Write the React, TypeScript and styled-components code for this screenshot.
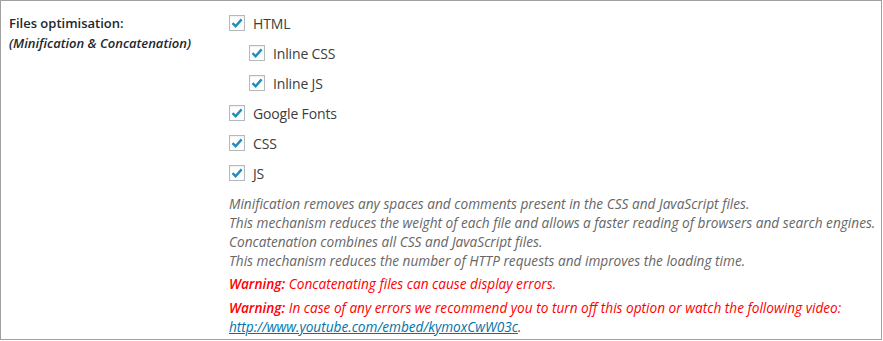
import React from "react";
import styled, { createGlobalStyle } from "styled-components";

const Global = createGlobalStyle`
  html, body { margin: 0; padding: 0; background: #fff; }
  body { font-family: "Open Sans", sans-serif; }
`;

const Panel = styled.div`
  box-sizing: border-box;
  width: 882px;
  height: 340px;
  border: 1px solid #a0a0a0;
  background: #fff;
  display: grid;
  grid-template-columns: 220px 1fr;
  padding: 7px 0 0 8px;
  overflow: hidden;
`;

const Th = styled.div`
  color: #23282d;
  font-size: 13px;
  font-weight: 600;
  line-height: 20px;
  padding-top: 5px;
`;

const Sub = styled.em`
  display: block;
  font-size: 13px;
  font-weight: 600;
`;

const Td = styled.div`
  display: flex;
  flex-direction: column;
`;

const Row = styled.label<{ $indent?: boolean }>`
  display: flex;
  align-items: center;
  gap: 8px;
  height: 30px;
  margin-left: ${(p) => (p.$indent ? "20px" : "0")};
  color: #3c3c3c;
  font-size: 14px;
  letter-spacing: -0.15px;
`;

const Box = styled.span`
  box-sizing: border-box;
  width: 16px;
  height: 16px;
  border: 1px solid #b4b9be;
  box-shadow: inset 0 1px 2px rgba(0, 0, 0, 0.07);
  display: flex;
  align-items: center;
  justify-content: center;
`;

const Desc = styled.p`
  margin: 6px 0 0;
  font-size: 13.65px;
  font-style: italic;
  color: #666;
  line-height: 19px;
`;

const Warn = styled.p`
  margin: 5px 0 0;
  font-size: 13.65px;
  font-style: italic;
  color: #f00;
  line-height: 18.5px;
  &:last-child {
    margin-top: 5.5px;
  }
`;

const Strong = styled.b`
  font-weight: 600;
`;

const Link = styled.a`
  color: #0073aa;
  text-decoration: underline;
`;

const Check = () => (
  <Box>
    <svg width="14" height="14" viewBox="0 0 14 14">
      <path d="M2.5 7.2 L5.6 10.2 L11.6 3.4" fill="none" stroke="#1e8cbe" strokeWidth="2.4" />
    </svg>
  </Box>
);

const items: { label: string; indent?: boolean }[] = [
  { label: "HTML" },
  { label: "Inline CSS", indent: true },
  { label: "Inline JS", indent: true },
  { label: "Google Fonts" },
  { label: "CSS" },
  { label: "JS" },
];

export default function App() {
  return (
    <>
      <Global />
      <Panel>
        <Th>
          Files optimisation:
          <Sub>(Minification &amp; Concatenation)</Sub>
        </Th>
        <Td>
          {items.map((it) => (
            <Row key={it.label} $indent={it.indent}>
              <Check />
              {it.label}
            </Row>
          ))}
          <Desc>
            Minification removes any spaces and comments present in the CSS and JavaScript files.
            <br />
            This mechanism reduces the weight of each file and allows a faster reading of browsers and search engines.
            <br />
            Concatenation combines all CSS and JavaScript files.
            <br />
            This mechanism reduces the number of HTTP requests and improves the loading time.
          </Desc>
          <Warn>
            <Strong>Warning:</Strong> Concatenating files can cause display errors.
          </Warn>
          <Warn>
            <Strong>Warning:</Strong> In case of any errors we recommend you to turn off this option or watch the following video:
            <br />
            <Link href="#">http://www.youtube.com/embed/kymoxCwW03c</Link>.
          </Warn>
        </Td>
      </Panel>
    </>
  );
}
